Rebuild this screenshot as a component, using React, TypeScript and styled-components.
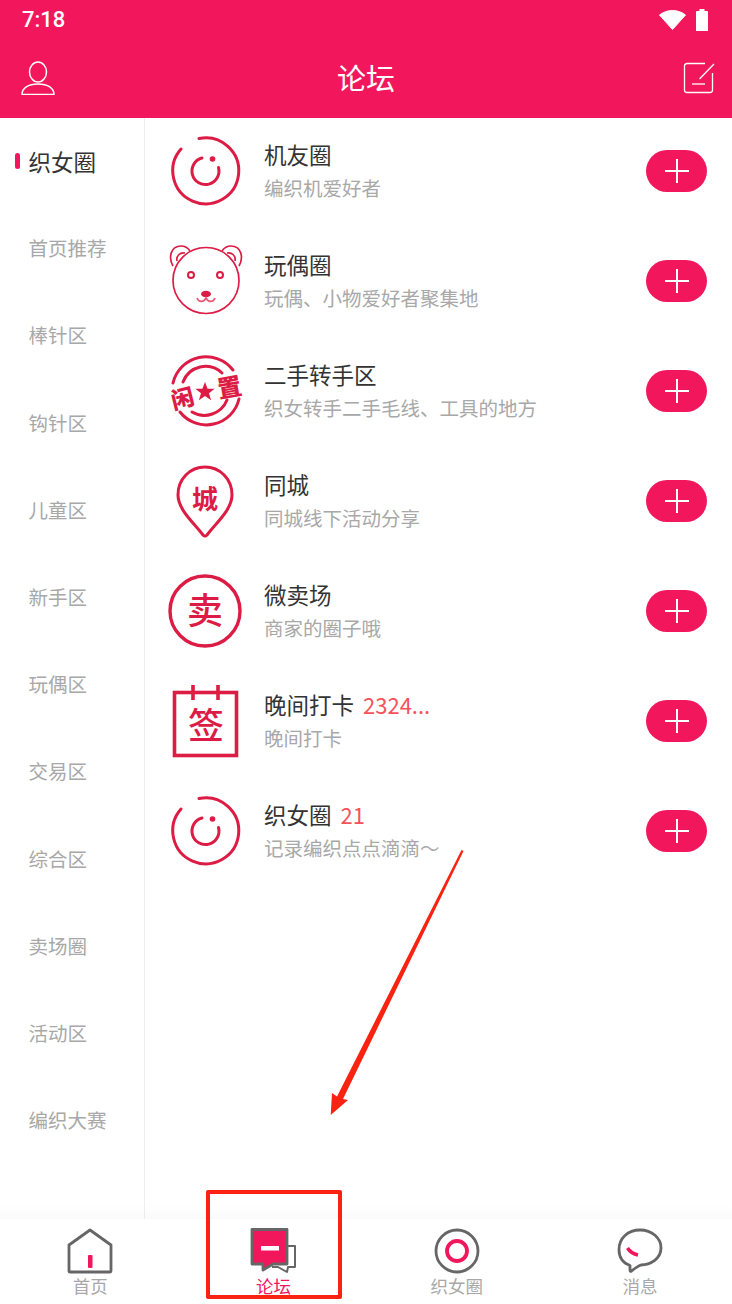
import React from 'react';
import styled, { createGlobalStyle } from 'styled-components';

const brand = '#f2175c';
const iconRed = '#dc1c44';
const cjk = '"Noto Sans CJK SC", "Noto Sans", sans-serif';

const GlobalStyle = createGlobalStyle`
  html, body, #root {
    margin: 0;
    height: 100%;
  }
  body {
    background: #fff;
    font-family: ${cjk};
    overflow: hidden;
  }
`;

const Root = styled.div`
  position: relative;
  width: 732px;
  height: 1304px;
  display: flex;
  flex-direction: column;
  overflow: hidden;
`;

const Header = styled.header`
  height: 118px;
  flex-shrink: 0;
  background: ${brand};
  color: #fff;
`;

const StatusBar = styled.div`
  height: 40px;
  padding: 0 24px 0 22px;
  display: flex;
  align-items: center;
  justify-content: space-between;
`;

const Clock = styled.span`
  font-family: Roboto, sans-serif;
  font-size: 22px;
  font-weight: 500;
  line-height: 40px;
`;

const StatusIcons = styled.div`
  display: flex;
  align-items: center;
  gap: 10px;
`;

const NavBar = styled.div`
  height: 78px;
  box-sizing: border-box;
  padding: 0 17px 4px 20px;
  display: grid;
  grid-template-columns: 1fr auto 1fr;
  align-items: center;

  & > svg:last-child {
    justify-self: end;
    margin-top: 2px;
  }
`;

const Title = styled.h1`
  margin: 0 3px 0 0;
  font-size: 29px;
  font-weight: 400;
  line-height: 70px;
`;

const Body = styled.div`
  flex: 1;
  display: flex;
  min-height: 0;
`;

const Sidebar = styled.nav`
  width: 145px;
  flex-shrink: 0;
  box-sizing: border-box;
  border-right: 1px solid #efefef;
`;

const SideList = styled.div`
  margin-top: -1px;
`;

const SideItem = styled.div<{ $active?: boolean }>`
  position: relative;
  height: 87.2px;
  padding-left: 28.500px;
  display: flex;
  align-items: center;
  font-size: ${(p) => (p.$active ? '22.5px' : '19.5px')};
  color: ${(p) => (p.$active ? '#333' : '#a8a8a8')};

  ${(p) =>
    p.$active &&
    `
    &::before {
      content: '';
      position: absolute;
      left: 15px;
      top: 36px;
      width: 5px;
      height: 16px;
      border-radius: 3px;
      background: ${brand};
    }
  `}
`;

const Forums = styled.main`
  flex: 1;
  margin-top: -2px;
`;

const Row = styled.div`
  height: 110px;
  padding: 0 25px 0 23px;
  display: flex;
  align-items: center;
`;

const RowIcon = styled.div`
  width: 76px;
  height: 76px;
  flex-shrink: 0;
  margin-right: 20px;

  svg {
    overflow: visible;
  }
`;

const RowText = styled.div`
  flex: 1;
  min-width: 0;
  padding-bottom: 2px;
`;

const RowTitle = styled.div`
  font-size: 22.5px;
  line-height: 32px;
  color: #333;
  display: flex;
  align-items: baseline;
`;

const Count = styled.span`
  margin-left: 9px;
  color: #f4535b;
  font-size: 22px;
  font-family: ${cjk};
`;

const RowSub = styled.div`
  margin-top: 3px;
  font-size: 19.5px;
  line-height: 30px;
  color: #a8a8a8;
`;

const JoinButton = styled.div`
  width: 61px;
  height: 42px;
  border-radius: 21px;
  background: ${brand};
  display: flex;
  align-items: center;
  justify-content: center;
  flex-shrink: 0;
`;

const TabBar = styled.footer`
  height: 85px;
  flex-shrink: 0;
  margin-left: -1.5px;
  display: grid;
  grid-template-columns: repeat(4, 183.3px);
  background: #fff;
`;

const Tab = styled.div<{ $active?: boolean }>`
  display: flex;
  flex-direction: column;
  align-items: center;
  padding-top: 9px;
  font-size: 17.5px;
  line-height: 22px;
  color: ${(p) => (p.$active ? brand : '#a8a8a8')};
`;

const TabIcon = styled.div`
  width: 46px;
  height: 46px;
  margin-bottom: 1px;
`;

const FadeBand = styled.div`
  position: absolute;
  left: 0;
  right: 0;
  top: 1205px;
  height: 14px;
  background: linear-gradient(rgba(0, 0, 0, 0), rgba(0, 0, 0, 0.018));
  pointer-events: none;
`;

const MarkBox = styled.div`
  position: absolute;
  left: 206px;
  top: 1190px;
  width: 136px;
  height: 109px;
  box-sizing: border-box;
  border: 4px solid #fa2210;
  border-radius: 2px;
`;

const MarkArrow = styled.svg`
  position: absolute;
  left: 320px;
  top: 840px;
`;

const Ring = () => (
  <svg width="76" height="76" viewBox="0 0 76 76" fill="none" stroke={iconRed} strokeLinecap="round">
    <path d="M31 5.500 A33 33 0 1 1 13 16" strokeWidth="3" />
    <path d="M34 25 A13.500 13.500 0 1 0 50.500 34.500" strokeWidth="3" />
    <circle cx="44.500" cy="26" r="2.800" fill={iconRed} stroke="none" />
  </svg>
);

const Bear = () => (
  <svg width="76" height="76" viewBox="0 0 76 76" fill="none" stroke={iconRed} strokeWidth="1.700">
    <circle cx="38" cy="37.500" r="33" />
    <path d="M5 23 C0 14 3 3 13 3 C17 3 20 5 22 8" />
    <path d="M9 18 C8 13 12 9 17 10" />
    <path d="M71 23 C76 14 73 3 63 3 C59 3 56 5 54 8" />
    <path d="M67 18 C68 13 64 9 59 10" />
    <circle cx="23" cy="32" r="3" strokeWidth="2" />
    <circle cx="52" cy="32" r="3" strokeWidth="2" />
    <ellipse cx="38" cy="51" rx="5" ry="3.200" fill={iconRed} stroke="none" />
    <path d="M29 55 C31 60 36 59 38 55 C40 59 45 60 47 55" stroke="#e85a78" />
  </svg>
);

const Stamp = () => (
  <svg width="76" height="76" viewBox="0 0 76 76" fill="none" stroke={iconRed} strokeLinecap="round">
    <path d="M5 30 A34 34 0 0 1 65 17" strokeWidth="3" />
    <path d="M15 29 A24 24 0 0 1 54 20" strokeWidth="3" />
    <path d="M12 59 A33.500 33.500 0 0 0 71 46" strokeWidth="3" />
    <path d="M24 59 A24.500 24.500 0 0 0 59 47" strokeWidth="3" />
    <text x="14.500" y="54" fontSize="23" fontWeight="900" fill={iconRed} stroke="none" textAnchor="middle" transform="rotate(-14 14.500 45.500)" fontFamily={cjk}>闲</text>
    <text x="61.500" y="43" fontSize="24" fontWeight="900" fill={iconRed} stroke="none" textAnchor="middle" transform="rotate(-10 61.500 34.500)" fontFamily={cjk}>置</text>
    <path d="M37 29 l2.600 6.800 h7 l-5.600 4.400 2.100 7 -6.100 -4.100 -6.100 4.100 2.100 -7 -5.600 -4.400 h7 z" fill={iconRed} stroke="none" />
  </svg>
);

const CityPin = () => (
  <svg width="76" height="76" viewBox="0 0 76 76" fill="none" stroke={iconRed}>
    <path d="M37 4 C22 4 10 16 10 32 C10 47 27 61 35 72 Q37 74 39 72 C47 61 64 47 64 32 C64 16 52 4 37 4 Z" strokeWidth="3" />
    <text x="37" y="46" fontSize="26" fontWeight="700" fill={iconRed} stroke="none" textAnchor="middle" fontFamily={cjk}>城</text>
  </svg>
);

const Sell = () => (
  <svg width="76" height="76" viewBox="0 0 76 76" fill="none" stroke={iconRed}>
    <circle cx="37" cy="38" r="35" strokeWidth="3.400" />
    <text x="37" y="51" fontSize="36" fontWeight="500" fill={iconRed} stroke="none" textAnchor="middle" fontFamily={cjk}>卖</text>
  </svg>
);

const Sign = () => (
  <svg width="76" height="76" viewBox="0 0 76 76" fill="none" stroke={iconRed}>
    <rect x="6.500" y="9.500" width="62" height="63" strokeWidth="3.600" />
    <path d="M25 2 V17 M50 2 V17" strokeWidth="3.600" />
    <text x="38" y="56" fontSize="36" fontWeight="500" fill={iconRed} stroke="none" textAnchor="middle" fontFamily={cjk}>签</text>
  </svg>
);

const rows = [
  { icon: <Ring />, title: '机友圈', sub: '编织机爱好者' },
  { icon: <Bear />, title: '玩偶圈', sub: '玩偶、小物爱好者聚集地' },
  { icon: <Stamp />, title: '二手转手区', sub: '织女转手二手毛线、工具的地方' },
  { icon: <CityPin />, title: '同城', sub: '同城线下活动分享' },
  { icon: <Sell />, title: '微卖场', sub: '商家的圈子哦' },
  { icon: <Sign />, title: '晚间打卡', count: '2324...', sub: '晚间打卡' },
  { icon: <Ring />, title: '织女圈', count: '21', sub: '记录编织点点滴滴～' },
];

const sections = ['织女圈', '首页推荐', '棒针区', '钩针区', '儿童区', '新手区', '玩偶区', '交易区', '综合区', '卖场圈', '活动区', '编织大赛'];

const grey = '#666';

const App = () => (
  <Root>
    <GlobalStyle />
    <Header>
      <StatusBar>
        <Clock>7:18</Clock>
        <StatusIcons>
          <svg width="27" height="20" viewBox="0 0 27 20">
            <path d="M0.500 5 C8 -1 19 -1 26.500 5 L13.500 19.500 Z" fill="#fff" stroke="#fff" strokeLinejoin="round" />
          </svg>
          <svg width="12" height="22" viewBox="0 0 12 22">
            <path d="M3.500 0 H8.500 V2 H11 Q12 2 12 3 V22 H0 V3 Q0 2 1 2 H3.500 Z" fill="#fff" />
          </svg>
        </StatusIcons>
      </StatusBar>
      <NavBar>
        <svg width="36" height="36" viewBox="0 0 36 36" fill="none" stroke="#fff" strokeWidth="1.500">
          <ellipse cx="18" cy="13" rx="8.500" ry="10" />
          <path d="M2 35.500 C2 29 8 25 18 25 C28 25 34 29 34 35.500 Z" strokeLinejoin="round" />
        </svg>
        <Title>论坛</Title>
        <svg width="32" height="32" viewBox="0 0 32 32" fill="none" stroke="#fff" strokeWidth="1.300">
          <path d="M22 1.500 H4 Q1.500 1.500 1.500 4 V28 Q1.500 30.500 4 30.500 H27 Q29.500 30.500 29.500 28 V11" />
          <path d="M31 2 L16.500 17" />
          <path d="M9 22 H22" />
        </svg>
      </NavBar>
    </Header>
    <Body>
      <Sidebar>
        <SideList>
          {sections.map((s, i) => (
            <SideItem key={s} $active={i === 0}>{s}</SideItem>
          ))}
        </SideList>
      </Sidebar>
      <Forums>
        {rows.map((r) => (
          <Row key={r.title + r.sub}>
            <RowIcon>{r.icon}</RowIcon>
            <RowText>
              <RowTitle>
                {r.title}
                {r.count && <Count>{r.count}</Count>}
              </RowTitle>
              <RowSub>{r.sub}</RowSub>
            </RowText>
            <JoinButton>
              <svg width="26" height="26" viewBox="0 0 26 26" stroke="#fff" strokeWidth="2">
                <path d="M1 13 H25 M13 1 V25" />
              </svg>
            </JoinButton>
          </Row>
        ))}
      </Forums>
    </Body>
    <TabBar>
      <Tab>
        <TabIcon>
          <svg width="46" height="46" viewBox="0 0 46 46" fill="none">
            <path d="M23 2 L44 17 V43 Q44 44 43 44 H3 Q2 44 2 43 V17 Z" stroke={grey} strokeWidth="2.800" strokeLinejoin="round" />
            <rect x="21" y="27" width="4.500" height="13" rx="1" fill={brand} />
          </svg>
        </TabIcon>
        首页
      </Tab>
      <Tab $active>
        <TabIcon>
          <svg width="46" height="46" viewBox="0 0 46 46" fill="none">
            <path d="M37 18 H45 V39 H38 L37 44 L28 39 H22" stroke={grey} strokeWidth="2" strokeLinejoin="round" />
            <path d="M2 1.500 H37 V36 H23 L13 42 V36 H2 Z" fill={brand} stroke={grey} strokeWidth="2.800" strokeLinejoin="round" />
            <rect x="11" y="18" width="18" height="4.500" fill="#fff" />
          </svg>
        </TabIcon>
        论坛
      </Tab>
      <Tab>
        <TabIcon>
          <svg width="46" height="46" viewBox="0 0 46 46" fill="none">
            <circle cx="23" cy="23" r="21" stroke={grey} strokeWidth="2.800" />
            <circle cx="23" cy="23" r="10" stroke={brand} strokeWidth="3.800" />
          </svg>
        </TabIcon>
        织女圈
      </Tab>
      <Tab>
        <TabIcon>
          <svg width="46" height="46" viewBox="0 0 46 46" fill="none">
            <path d="M13 37.500 C6 35 2 29 2 21.500 C2 10 11 2 23 2 C35 2 44 10 44 20 C44 31 33 37 24 37 C21 38 17 41 14.500 43 Q13 44 13 42 Z" stroke={grey} strokeWidth="2.800" strokeLinejoin="round" />
            <path d="M10.500 20 C13 24 16 26 21 27" stroke={brand} strokeWidth="3.500" />
          </svg>
        </TabIcon>
        消息
      </Tab>
    </TabBar>
    <FadeBand />
    <MarkBox />
    <MarkArrow width="146" height="280" viewBox="0 0 146 280">
      <path d="M141.500 10 L143.500 11 L23 259 L28 260 L10.700 275 L12 253 L17 256.500 Z" fill="#fa2210" />
    </MarkArrow>
  </Root>
);

export default App;
